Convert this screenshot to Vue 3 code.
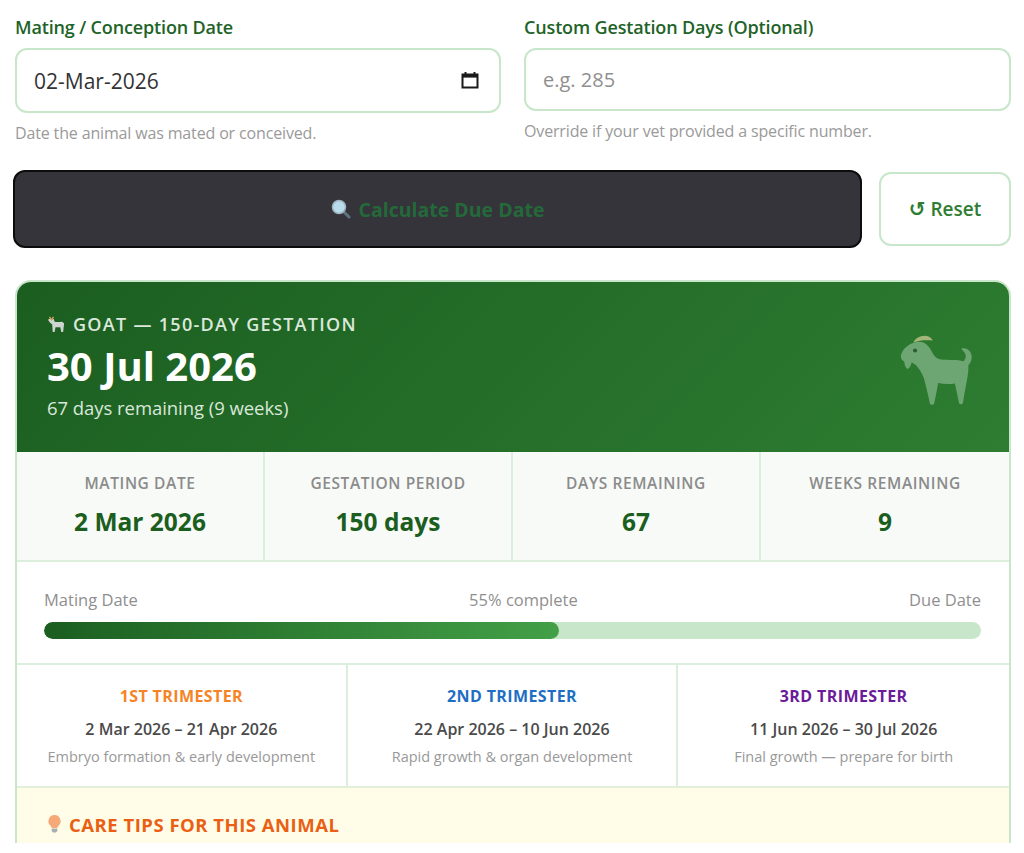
<template>
  <div class="page">
    <div class="form-row">
      <div class="field">
        <label class="label">Mating / Conception Date</label>
        <div class="date-wrap">
          <input class="input date" type="text" value="02-Mar-2026" readonly />
          <svg class="cal" viewBox="0 0 18 18" width="18" height="18">
            <path d="M1.5 3.5h15v13h-15z" fill="none" stroke="#1a1a1a" stroke-width="2" />
            <path d="M1.5 3h15v3.6h-15z" fill="#1a1a1a" />
            <path d="M4.5 1v3M13.5 1v3" stroke="#1a1a1a" stroke-width="2" />
          </svg>
        </div>
        <div class="hint">Date the animal was mated or conceived.</div>
      </div>
      <div class="field">
        <label class="label">Custom Gestation Days (Optional)</label>
        <input class="input" type="text" placeholder="e.g. 285" />
        <div class="hint">Override if your vet provided a specific number.</div>
      </div>
    </div>

    <div class="actions">
      <button class="calc">
        <svg class="lens" viewBox="0 0 20 20" width="20" height="20">
          <path d="M12.5 12.5l5.5 5.5" stroke="#5f7482" stroke-width="3" stroke-linecap="round" />
          <circle cx="8" cy="8" r="6.5" fill="#b9dcec" stroke="#9fb4c0" stroke-width="1.5" />
        </svg>
        Calculate Due Date
      </button>
      <button class="reset"><span class="reset-icon">↺</span> Reset</button>
    </div>

    <div class="result">
      <div class="hero">
        <div>
          <div class="hero-kicker">
            <svg viewBox="0 0 20 20" width="19" height="19">
              <path d="M1 5l2-1 2 1 2-1 1 3c3 1 6 0 8 0l2 2-1 9h-2l-1-5H9l-1 5H6l-.5-8L3 8z" fill="#cfd6cf" />
              <path d="M2.5 2l2.3 3 2-3" stroke="#d9a05b" stroke-width="1.4" fill="none" />
            </svg>
            GOAT — 150-DAY GESTATION
          </div>
          <div class="hero-date">30 Jul 2026</div>
          <div class="hero-sub">67 days remaining (9 weeks)</div>
        </div>
        <svg class="hero-goat" viewBox="120 68 218 214" width="73" height="72">
          <path d="M160 96c6-18 44-32 58-6-18-2-38-2-58 6z" fill="#a3b578" />
          <path d="M160 97c22-8 42-2 56 28 6 12 14 20 26 22 24 2 50 0 68 5 8-8 8-20 2-27-3-4-8-7-8-11 14-4 28 6 30 22 1 12-4 22-10 28 2 22-6 50-16 112-2 6-10 6-12 0l-12-58c-14 3-34 3-50-1-4 22-8 44-12 60-2 6-11 6-13 0-6-30-12-54-18-76-8-18-16-30-24-38l-12-8c-2 10-6 18-12 20-6-3-10-12-10-22-6-4-12-8-10-18 2-14 14-30 36-38z" fill="#6da673" />
          <circle cx="165" cy="120" r="6" fill="#2c5a32" />
        </svg>
      </div>

      <div class="stats">
        <div v-for="s in stats" :key="s.label" class="stat">
          <div class="stat-label">{{ s.label }}</div>
          <div class="stat-value">{{ s.value }}</div>
        </div>
      </div>

      <div class="progress">
        <div class="progress-labels">
          <span>Mating Date</span>
          <span>55% complete</span>
          <span>Due Date</span>
        </div>
        <div class="track"><div class="fill"></div></div>
      </div>

      <div class="trimesters">
        <div v-for="t in trimesters" :key="t.name" class="tri">
          <div class="tri-name" :class="t.cls">{{ t.name }}</div>
          <div class="tri-dates">{{ t.dates }}</div>
          <div class="tri-desc">{{ t.desc }}</div>
        </div>
      </div>

      <div class="care">
        <svg viewBox="0 0 16 20" width="15" height="19">
          <path d="M8 1a6.5 6.5 0 0 0-4 11.6c.7.6 1 1.4 1 2.4h6c0-1 .3-1.8 1-2.4A6.5 6.5 0 0 0 8 1z" fill="#f5a878" />
          <path d="M5 15.5h6V18l-1.5 1.5h-3L5 18z" fill="#a5aeb5" />
        </svg>
        <span>CARE TIPS FOR THIS ANIMAL</span>
      </div>
    </div>
  </div>
</template>

<script setup>
const stats = [
  { label: 'MATING DATE', value: '2 Mar 2026' },
  { label: 'GESTATION PERIOD', value: '150 days' },
  { label: 'DAYS REMAINING', value: '67' },
  { label: 'WEEKS REMAINING', value: '9' },
]

const trimesters = [
  { name: '1ST TRIMESTER', cls: 'orange', dates: '2 Mar 2026 – 21 Apr 2026', desc: 'Embryo formation & early development' },
  { name: '2ND TRIMESTER', cls: 'blue', dates: '22 Apr 2026 – 10 Jun 2026', desc: 'Rapid growth & organ development' },
  { name: '3RD TRIMESTER', cls: 'purple', dates: '11 Jun 2026 – 30 Jul 2026', desc: 'Final growth — prepare for birth' },
]
</script>

<style>
html, body { background: #fff; }
</style>

<style scoped>
.page {
  height: 843px;
  overflow: hidden;
  padding: 15px 13px 0 15px;
  box-sizing: border-box;
  font-family: "Open Sans", "Noto Sans", sans-serif;
  color: #333;
}
.form-row { display: grid; grid-template-columns: 486px 487px; gap: 23px; }
.label {
  display: block;
  font-size: 18px;
  font-weight: 600;
  letter-spacing: -0.15px;
  line-height: 24px;
  color: #1e6328;
  margin-bottom: 9px;
}
.date-wrap { position: relative; }
.input {
  display: block;
  width: 100%;
  height: 63px;
  box-sizing: border-box;
  padding: 0 17px;
  border: 2px solid #c8e6c9;
  border-radius: 12px;
  background: #fff;
  font: 400 20px "Open Sans", "Noto Sans", sans-serif;
  color: #333;
  outline: none;
}
.input.date { height: 65px; padding-left: 17px; font-size: 21px; }
.input::placeholder { color: #8f8f8f; opacity: 1; }
.cal { position: absolute; right: 22px; top: 23px; }
.hint { margin-top: 10px; font-size: 16px; line-height: 20px; color: #9a9a9a; letter-spacing: -0.15px; }
.actions { display: flex; align-items: center; gap: 17px; margin-top: 27px; margin-left: -2px; }
.calc {
  flex: 0 0 849px;
  height: 78px;
  display: flex;
  align-items: center;
  justify-content: center;
  gap: 8px;
  border: 2px solid #0c0c0c;
  border-radius: 12px;
  background: #35343a;
  color: #24693a;
  font: 700 19.5px "Open Sans", "Noto Sans", sans-serif;
  box-sizing: border-box;
}
.reset {
  flex: 0 0 132px;
  height: 74px;
  border: 2px solid #c8e6c9;
  border-radius: 12px;
  background: #fff;
  color: #2e7d32;
  font: 600 19px "Open Sans", "Noto Sans", sans-serif;
  box-sizing: border-box;
}
.reset-icon { font-family: "DejaVu Sans", sans-serif; font-size: 20px; line-height: 20px; }
.result {
  margin-top: 32px;
  width: 996px;
  box-sizing: border-box;
  border: 2px solid #c8e6c9;
  border-bottom: none;
  border-radius: 16px 16px 0 0;
  overflow: hidden;
}
.hero {
  height: 170px;
  box-sizing: border-box;
  padding: 30px 36px 0 30px;
  display: flex;
  justify-content: space-between;
  background: linear-gradient(135deg, #1b5e20, #2e7d32);
  color: #fff;
}
.hero-kicker {
  display: flex;
  align-items: center;
  gap: 7px;
  font-size: 18px;
  font-weight: 600;
  letter-spacing: 1.3px;
  line-height: 24px;
  color: #dbe8dc;
}
.hero-date { font-size: 40px; font-weight: 700; line-height: 54px; margin-top: 3px; }
.hero-sub { font-size: 18.5px; line-height: 24px; color: #d9e8da; margin-top: 3px; letter-spacing: -0.05px; }
.hero-goat { margin-top: 21px; }
.stats { display: grid; grid-template-columns: repeat(4, 1fr); background: #f7faf7; border-bottom: 2px solid #dcefdd; }
.stat { height: 108px; padding-top: 20px; box-sizing: border-box; text-align: center; border-right: 2px solid #dcefdd; }
.stat:last-child { border-right: none; }
.stat-label { font-size: 15.5px; font-weight: 600; letter-spacing: 0.6px; line-height: 22px; color: #8b8b8b; }
.stat-value { margin-top: 12px; font-size: 24.5px; font-weight: 700; line-height: 32px; color: #1b5e20; }
.progress { height: 103px; padding: 28px 28px 0 27px; box-sizing: border-box; border-bottom: 2px solid #dcefdd; }
.progress-labels { display: flex; justify-content: space-between; font-size: 16.5px; line-height: 20px; color: #8f8f8f; }
.track { margin-top: 12px; height: 17px; border-radius: 9px; background: #c8e6c9; overflow: hidden; }
.fill { width: 55%; height: 100%; border-radius: 9px; background: linear-gradient(90deg, #1b5e20, #43a047); }
.trimesters { display: grid; grid-template-columns: repeat(3, 1fr); border-bottom: 2px solid #e3efd9; }
.tri { height: 121px; padding-top: 20px; box-sizing: border-box; text-align: center; border-right: 2px solid #dcefdd; }
.tri:last-child { border-right: none; }
.tri-name { font-size: 16px; font-weight: 700; line-height: 22px; letter-spacing: 0.4px; }
.orange { color: #f58426; }
.blue { color: #1e6fc4; }
.purple { color: #6a1b9a; }
.tri-dates { margin-top: 11px; font-size: 16px; font-weight: 600; line-height: 22px; color: #4a4a4a; }
.tri-desc { margin-top: 6px; font-size: 14.5px; line-height: 22px; color: #999; }
.care {
  height: 80px;
  padding: 26px 0 0 30px;
  box-sizing: border-box;
  display: flex;
  align-items: flex-start;
  gap: 7px;
  background: #fffde7;
  font-size: 18.5px;
  font-weight: 700;
  line-height: 22px;
  letter-spacing: 0.5px;
  color: #ea5f14;
}
</style>
